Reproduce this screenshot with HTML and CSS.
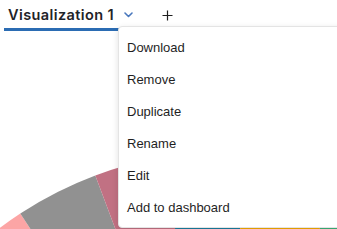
FILE: index.html
```html
<!DOCTYPE html>
<html lang="en">
<head>
  <meta charset="UTF-8" />
  <meta name="viewport" content="width=device-width, initial-scale=1.0" />
  <title>Visualization 1</title>
  <link rel="stylesheet" href="styles.css">
</head>
<body>
  <!-- Tabs -->
  <div class="tabs">
    <div class="tab">
      <span class="tab-label">Visualization 1</span>
      <svg class="chevron" width="9" height="6" viewBox="0 0 9 6">
        <path d="M1 1 L4.5 4.5 L8 1" fill="none" stroke="#4a78bd" stroke-width="1.6" stroke-linecap="round" stroke-linejoin="round" />
      </svg>
    </div>
    <button class="add-tab">
      <svg width="11" height="11" viewBox="0 0 11 11">
        <path d="M5.5 0.5 V10.5 M0.5 5.5 H10.5" stroke="#1f1f1f" stroke-width="1.2" />
      </svg>
    </button>
  </div>

  <!-- Chart -->
  <div class="chart">
    <svg width="337" height="198" viewBox="0 31 337 198">
      <path d="M230 534 L-63.4 287.8 A383 383 0 0 1 20.3 213.5 Z" fill="#fca5a5" />
      <path d="M230 534 L20.3 213.5 A383 383 0 0 1 95.3 175.5 Z" fill="#919191" />
      <path d="M230 534 L95.3 175.5 A383 383 0 0 1 162.2 157 Z" fill="#c17183" />
      <path d="M230 534 L162.2 157 A383 383 0 0 1 242.7 151.2 Z" fill="#1b7ea0" />
      <path d="M230 534 L242.7 151.2 A383 383 0 0 1 338.1 166.6 Z" fill="#f5aa00" />
      <path d="M230 534 L338.1 166.6 A383 383 0 0 1 476.2 240.6 Z" fill="#3bb37a" />
    </svg>
  </div>

  <!-- Tab menu -->
  <ul class="menu">
    <li>Download</li>
    <li>Remove</li>
    <li>Duplicate</li>
    <li>Rename</li>
    <li>Edit</li>
    <li>Add to dashboard</li>
  </ul>
</body>
</html>
```

FILE: styles.css
```css
body {
  margin: 0;
  font-family: 'Liberation Sans', Arial, sans-serif;
  background: #fff;
  color: #1f1f1f;
  width: 337px;
  height: 229px;
  overflow: hidden;
  position: relative;
}
.tabs {
  display: flex;
  align-items: flex-start;
  height: 31px;
  padding-left: 4px;
}
.tab {
  display: flex;
  align-items: center;
  gap: 10px;
  height: 28px;
  padding: 0 10px 0 4px;
  border-bottom: 3px solid #2b6cb3;
}
.tab-label {
  font-family: Inter, 'Liberation Sans', sans-serif;
  font-size: 14.5px;
  font-weight: 600;
  letter-spacing: 0.4px;
  color: #1f2328;
}
.chevron {
  margin-top: 1px;
}
.add-tab {
  display: flex;
  align-items: center;
  justify-content: center;
  background: none;
  border: none;
  padding: 0;
  width: 36px;
  height: 30px;
  margin-left: 6px;
}
.chart {
  height: 198px;
  overflow: hidden;
}
.chart svg {
  display: block;
}
.menu {
  position: absolute;
  top: 26px;
  left: 118px;
  width: 240px;
  margin: 0;
  padding: 5px 0 3px;
  list-style: none;
  background: #fff;
  border: 1px solid #e4e4e4;
  border-radius: 4px;
  box-shadow: 0 2px 6px rgba(0, 0, 0, 0.12);
}
.menu li {
  height: 32px;
  line-height: 32px;
  padding: 0 8px;
  font-size: 13px;
  color: #1f1f1f;
}
```
